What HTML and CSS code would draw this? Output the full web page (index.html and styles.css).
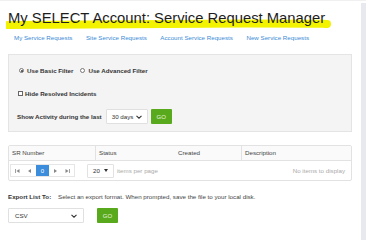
FILE: index.html
```html
<!DOCTYPE html>
<html>
<head>
<meta charset="utf-8">
<link rel="stylesheet" href="styles.css">
</head>
<body>
<div class="page">
  <main class="main">
    <h1 class="title">
      <svg class="marker" width="326" height="12" viewBox="0 0 326 12"><path d="M2 7 C 60 6.5, 150 5.5, 240 5.5 S 310 5.5, 321 6" stroke="#f3f300" stroke-width="8" fill="none" stroke-linecap="round"/></svg>
      <span class="title-text">My SELECT Account: Service Request Manager</span>
    </h1>
    <nav class="tabs">
      <a class="tab">My Service Requests</a>
      <a class="tab">Site Service Requests</a>
      <a class="tab">Account Service Requests</a>
      <a class="tab">New Service Requests</a>
    </nav>
    <section class="filter">
      <div class="row radios">
        <label class="opt"><span class="radio on"></span>Use Basic Filter</label>
        <label class="opt"><span class="radio"></span>Use Advanced Filter</label>
      </div>
      <div class="row">
        <label class="opt"><span class="check"></span>Hide Resolved Incidents</label>
      </div>
      <div class="row show">
        <span class="lbl">Show Activity during the last</span>
        <span class="select days">30 days<svg width="6" height="4" viewBox="0 0 6 4"><path d="M0.5 0.8 L3 3.2 L5.5 0.8" stroke="#333" stroke-width="1.1" fill="none"/></svg></span>
        <span class="go">GO</span>
      </div>
    </section>
    <section class="grid">
      <div class="ghead">
        <div class="gcol c1">SR Number</div>
        <div class="gcol c2">Status</div>
        <div class="gcol c3">Created</div>
        <div class="gcol c4">Description</div>
      </div>
      <div class="gpager">
        <div class="pages">
          <span class="pb"><svg width="5" height="4" viewBox="0 0 5 4"><path d="M0.5 0 V4" stroke="#888" stroke-width="0.8"/><path d="M4.5 0 L1.5 2 L4.5 4 Z" fill="#888"/></svg></span>
          <span class="pb"><svg width="3" height="4" viewBox="0 0 3 4"><path d="M3 0 L0 2 L3 4 Z" fill="#888"/></svg></span>
          <span class="pb active">0</span>
          <span class="pb"><svg width="3" height="4" viewBox="0 0 3 4"><path d="M0 0 L3 2 L0 4 Z" fill="#888"/></svg></span>
          <span class="pb"><svg width="5" height="4" viewBox="0 0 5 4"><path d="M0.5 0 L3.5 2 L0.5 4 Z" fill="#888"/><path d="M4.5 0 V4" stroke="#888" stroke-width="0.8"/></svg></span>
        </div>
        <span class="psize">20<svg width="4" height="3" viewBox="0 0 4 3"><path d="M0 0 L4 0 L2 3 Z" fill="#333"/></svg></span>
        <span class="ipp">items per page</span>
        <span class="none">No items to display</span>
      </div>
    </section>
    <section class="export">
      <div class="erow">
        <span class="elbl">Export List To:</span>
        <span class="edesc">Select an export format. When prompted, save the file to your local disk.</span>
      </div>
      <div class="erow2">
        <span class="select csv">CSV<svg width="6" height="4" viewBox="0 0 6 4"><path d="M0.5 0.8 L3 3.2 L5.5 0.8" stroke="#333" stroke-width="1.1" fill="none"/></svg></span>
        <span class="go">GO</span>
      </div>
    </section>
  </main>
  <div class="strip"></div>
</div>
</body>
</html>
```
FILE: styles.css
```css
* { box-sizing: border-box; }
html, body { margin: 0; padding: 0; background: #fff; }
body { font-family: "Liberation Sans", Arial, sans-serif; color: #333; width: 366px; height: 240px; overflow: hidden; }
.page { display: flex; height: 240px; border-top: 1px solid #f0f0f0; }
.main { flex: 1; padding: 0 9px 0 8px; }
.strip { width: 5px; background: #e8e9ee; margin-top: 2px; }
.title { position: relative; margin: 8px 0 0 0; font-size: 14.8px; font-weight: normal; line-height: 18px; color: #1d1d1d; height: 18px; }
.marker { position: absolute; left: -2px; top: 9px; }
.title-text { position: relative; }
.tabs { display: flex; gap: 13.5px; padding-left: 6px; margin-top: 6px; height: 10px; }
.tab { font-size: 6.2px; line-height: 10px; color: #3a8bd6; }
.filter { margin-top: 11px; background: #f4f4f4; border: 1px solid #e4e4e4; height: 78px; padding: 10px 0 0 8px; }
.row { display: flex; align-items: center; height: 11px; font-size: 6.2px; font-weight: bold; color: #333; }
.opt { display: flex; align-items: center; margin-right: 5px; }
.radio { width: 5px; height: 5px; border-radius: 50%; border: 0.7px solid #777; background: #fff; margin: 0 3px 0 2px; position: relative; }
.radio.on::after { content: ""; position: absolute; left: 0.8px; top: 0.8px; width: 2px; height: 2px; border-radius: 50%; background: #333; }
.check { width: 5px; height: 5px; border: 0.7px solid #666; background: #fff; margin: 0 2px 0 1px; }
.radios { margin-bottom: 12px; }
.show { margin-top: 10px; height: 15px; }
.lbl { margin-right: 4px; }
.select { display: flex; align-items: center; justify-content: space-between; background: #fff; border: 1px solid #e0e0e0; border-radius: 1px; font-size: 6.2px; font-weight: normal; color: #333; height: 15px; }
.days { width: 42px; padding: 0 5px 0 5px; }
.go { display: flex; align-items: center; justify-content: center; background: #59a91d; color: #e8f5dc; font-size: 6px; font-weight: normal; width: 21px; height: 15px; margin-left: 3px; border-radius: 1px; }
.grid { margin-top: 13px; border: 1px solid #e2e2e2; border-radius: 2px; height: 36px; font-size: 6.2px; }
.ghead { display: flex; height: 15px; border-bottom: 1px solid #e2e2e2; background: #fafafa; }
.gcol { line-height: 14px; padding-left: 3px; color: #444; }
.c1 { width: 87px; border-right: 1px solid #e2e2e2; }
.c2 { width: 82px; }
.c3 { width: 64px; border-right: 1px solid #e2e2e2; padding-left: 0; }
.c4 { flex: 1; }
.gpager { display: flex; align-items: center; height: 19px; padding-left: 1px; }
.pages { display: flex; border: 1px solid #e6e6e6; height: 13px; }
.pb { width: 12.6px; display: flex; align-items: center; justify-content: center; color: #888; background: #fff; }
.pb.active { background: #3c8ddb; color: #fff; font-size: 6px; }
.psize { margin-left: 12px; width: 27px; height: 14px; border: 1px solid #e2e2e2; border-radius: 1px; display: flex; align-items: center; justify-content: space-between; padding: 0 5px 0 5px; color: #333; background: #fff; }
.ipp { margin-left: 3px; color: #aaa; }
.none { margin-left: auto; margin-right: 6px; color: #aaa; }
.export { margin-top: 10px; font-size: 6.2px; }
.erow { display: flex; height: 10px; align-items: center; }
.elbl { font-weight: bold; color: #333; width: 50px; }
.edesc { color: #444; }
.erow2 { display: flex; align-items: center; margin-top: 7px; }
.csv { width: 76px; height: 15px; padding: 0 6px 0 6px; }
.erow2 .go { margin-left: 13px; }
```
